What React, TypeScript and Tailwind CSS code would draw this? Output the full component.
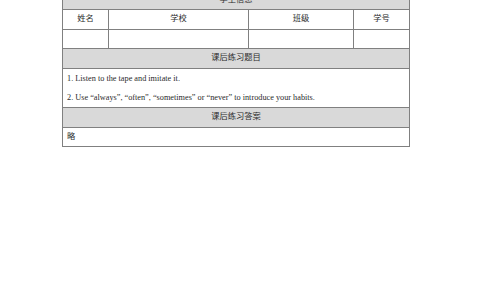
export default function App() {
  const cell = "flex items-center justify-center border-r border-[#808080]";
  return (
    <div className="w-[484px] h-[300px] overflow-hidden bg-white text-[#2b2b2b] text-[8.25px]" style={{ fontFamily: '"Liberation Serif", "Noto Sans CJK SC", serif' }}>
      <div className="ml-[62px] -mt-[10.5px] w-[348px] border border-[#808080]">
        <div className="h-[19.5px] flex items-center justify-center bg-[#d9d9d9] border-b border-[#808080]">学生信息</div>
        <div className="grid grid-cols-[46px_140px_105px_1fr] h-[19.5px] border-b border-[#808080]">
          <div className={cell}>姓名</div>
          <div className={cell}>学校</div>
          <div className={cell}>班级</div>
          <div className="flex items-center justify-center">学号</div>
        </div>
        <div className="grid grid-cols-[46px_140px_105px_1fr] h-[19.5px] border-b border-[#808080]">
          <div className={cell}></div>
          <div className={cell}></div>
          <div className={cell}></div>
          <div></div>
        </div>
        <div className="h-[20px] flex items-center justify-center bg-[#d9d9d9] border-b border-[#808080]">课后练习题目</div>
        <div className="px-[4px] py-[0px] border-b border-[#808080] leading-[19.2px]">
          <p>1. Listen to the tape and imitate it.</p>
          <p>2. Use “always”, “often”, “sometimes” or “never” to introduce your habits.</p>
        </div>
        <div className="h-[19.3px] flex items-center justify-center bg-[#d9d9d9] border-b border-[#808080]">课后练习答案</div>
        <div className="h-[18.5px] flex items-center px-[4px]">略</div>
      </div>
    </div>
  );
}
